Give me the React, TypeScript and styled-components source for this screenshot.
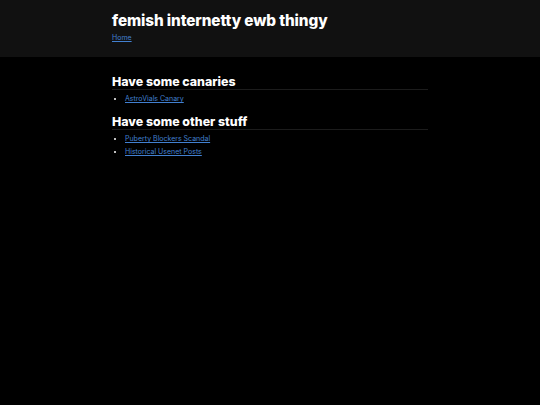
import styled, { createGlobalStyle } from 'styled-components';

const GlobalStyle = createGlobalStyle`
  html, body {
    margin: 0;
    padding: 0;
    background: #000;
    color: #fff;
    font-family: Inter, 'Liberation Sans', sans-serif;
  }
`;

const Page = styled.div`
  min-height: 405px;
  background: #000;
`;

const Header = styled.header`
  background: #111;
  height: 57px;
  box-sizing: border-box;
  padding-top: 11px;
`;

const Wrap = styled.div`
  width: 316px;
  margin: 0 auto;
`;

const Title = styled.h1`
  margin: 0;
  font-size: 15.3px;
  line-height: 19px;
  font-weight: 800;
  letter-spacing: -0.1px;
`;

const Link = styled.a`
  color: #4280d0;
  font-size: 7px;
  text-decoration: underline;
`;

const Nav = styled.nav`
  margin-top: 3px;
  font-size: 7px;
  line-height: 10px;
`;

const Main = styled.main`
  padding-top: 18px;
`;

const Section = styled.section`
  margin-bottom: 10px;
`;

const Heading = styled.h2`
  margin: 0;
  font-size: 12.4px;
  line-height: 14px;
  font-weight: 800;
  border-bottom: 1px solid #1c1c1c;
`;

const List = styled.ul`
  margin: 2px 0 0;
  padding-left: 13px;
  font-size: 7px;
`;

const Item = styled.li`
  line-height: 13px;
  color: #fff;
`;

export default function App() {
  return (
    <Page>
      <GlobalStyle />
      <Header>
        <Wrap>
          <Title>femish internetty ewb thingy</Title>
          <Nav>
            <Link href="#">Home</Link>
          </Nav>
        </Wrap>
      </Header>
      <Main>
        <Wrap>
          <Section>
            <Heading>Have some canaries</Heading>
            <List>
              <Item><Link href="#">AstroVials Canary</Link></Item>
            </List>
          </Section>
          <Section>
            <Heading>Have some other stuff</Heading>
            <List>
              <Item><Link href="#">Puberty Blockers Scandal</Link></Item>
              <Item><Link href="#">Historical Usenet Posts</Link></Item>
            </List>
          </Section>
        </Wrap>
      </Main>
    </Page>
  );
}
